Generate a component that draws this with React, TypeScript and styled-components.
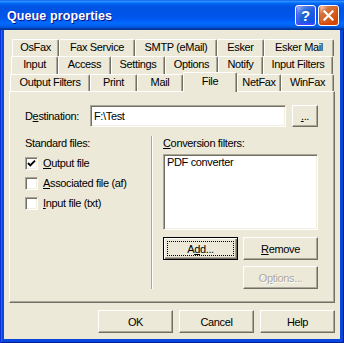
import React from "react";
import styled, { createGlobalStyle, css } from "styled-components";

const GlobalStyle = createGlobalStyle`
  html, body {
    margin: 0;
    padding: 0;
    background: #ECE9D8;
  }
  body {
    font-family: "Liberation Sans", Arial, sans-serif;
    font-size: 11px;
    letter-spacing: -0.35px;
    color: #000;
  }
  * {
    box-sizing: border-box;
  }
`;

const raised = css`
  border: 1px solid;
  border-color: #fff #716f64 #716f64 #fff;
  box-shadow: inset -1px -1px #aca899;
`;

const sunken = css`
  border: 1px solid;
  border-color: #aca899 #fff #fff #aca899;
  box-shadow: inset 1px 1px #716f64, inset -1px -1px #f1efe2;
  background: #fff;
`;

const Window = styled.div`
  width: 344px;
  height: 343px;
  display: flex;
  flex-direction: column;
  background: #0a47dc;
  box-shadow: inset 1px 0 #0831d9, inset -1px 0 #001ea0, inset 0 -1px #001ea0,
    inset 2px 0 #166aee, inset -2px 0 #0846d2;
`;

const TitleBar = styled.div`
  height: 30px;
  flex: none;
  display: flex;
  align-items: center;
  padding: 0 5px 0 7px;
  background: linear-gradient(
    to bottom,
    #0058ee 0%,
    #3593ff 4%,
    #288eff 6%,
    #127dff 8%,
    #036ffc 10%,
    #0262ee 14%,
    #0057e5 20%,
    #0054e3 24%,
    #0055eb 56%,
    #005bf5 66%,
    #026afe 76%,
    #0062ef 86%,
    #0052d6 92%,
    #0040ab 94%,
    #003092 100%
  );
`;

const Title = styled.div`
  flex: 1;
  color: #fff;
  font-family: "Liberation Sans", Arial, sans-serif;
  font-weight: bold;
  font-size: 12.5px;
  letter-spacing: 0.1px;
  text-shadow: 1px 1px #0f1089;
  padding-top: 1px;
`;

const CaptionButton = styled.div<{ $kind: "help" | "close" }>`
  width: 21px;
  height: 21px;
  margin-left: 2px;
  border: 1px solid #fff;
  border-radius: 3px;
  display: flex;
  align-items: center;
  justify-content: center;
  color: #fff;
  font-family: "Liberation Sans", Arial, sans-serif;
  font-weight: bold;
  font-size: 15px;
  letter-spacing: 0;
  background: ${(p) =>
    p.$kind === "close"
      ? "radial-gradient(circle at 90% 90%, #cc4600 0%, #dc6527 55%, #cd7546 70%, #ffccb2 90%, #fff 100%)"
      : "radial-gradient(circle at 90% 90%, #0054e9 0%, #2263d5 55%, #4479e4 70%, #a3bbec 90%, #fff 100%)"};
  box-shadow: inset 0 -1px 2px 1px ${(p) => (p.$kind === "close" ? "#da4600" : "#4646ff")};
`;

const Body = styled.div`
  flex: 1;
  margin: 0 4px 4px;
  background: #ece9d8;
  padding: 9px 5px 6px;
  display: flex;
  flex-direction: column;
`;

const TabRow = styled.div<{ $indent: number; $h: number }>`
  display: flex;
  align-items: flex-end;
  height: ${(p) => p.$h}px;
  padding-left: ${(p) => p.$indent}px;
`;

const Tab = styled.div<{ $w: number; $active?: boolean }>`
  width: ${(p) => p.$w}px;
  height: 100%;
  flex: none;
  border-top: 1px solid #fff;
  border-left: 1px solid #fff;
  border-right: 1px solid #716f64;
  box-shadow: inset -1px 0 #aca899;
  border-radius: 2px 2px 0 0;
  text-align: center;
  line-height: 13px;
  padding-top: 1px;
  white-space: nowrap;
  background: #ece9d8;
  ${(p) =>
    p.$active &&
    css`
      height: 20px;
      margin-bottom: -1px;
      padding-top: 2px;
      position: relative;
      z-index: 1;
    `}
`;

const Panel = styled.div`
  height: 212px;
  flex: none;
  ${raised}
  padding: 13px 16px 0 15px;
`;

const FieldRow = styled.div`
  display: flex;
  align-items: center;
  height: 22px;
`;

const Label = styled.div<{ $w?: number }>`
  line-height: 14px;
  white-space: nowrap;
  ${(p) => p.$w && `width: ${p.$w}px; flex: none;`}
`;

const TextBox = styled.div`
  flex: 1;
  height: 22px;
  ${sunken}
  padding: 0 3px;
  display: flex;
  align-items: center;
  margin-right: 6px;
`;

const Button = styled.div<{ $w: number; $focused?: boolean; $disabled?: boolean }>`
  width: ${(p) => p.$w}px;
  height: ${(p) => (p.$w < 40 ? 22 : 23)}px;
  flex: none;
  position: relative;
  display: flex;
  align-items: center;
  justify-content: center;
  background: #ece9d8;
  ${(p) =>
    p.$focused
      ? css`
          border: 1px solid #000;
          box-shadow: inset 1px 1px #fff, inset -1px -1px #716f64, inset -2px -2px #aca899;
          &::after {
            content: "";
            position: absolute;
            inset: 3px;
            border: 1px dotted #000;
          }
        `
      : raised}
  ${(p) =>
    p.$disabled &&
    css`
      color: #aca899;
      text-shadow: 1px 1px #fff;
    `}
`;

const U = styled.span`
  text-decoration: underline;
  text-underline-offset: 1px;
`;

const Columns = styled.div`
  display: flex;
  margin-top: 9px;
`;

const LeftCol = styled.div`
  width: 126px;
  flex: none;
`;

const Separator = styled.div`
  width: 2px;
  flex: none;
  border-left: 1px solid #aca899;
  border-right: 1px solid #fff;
`;

const RightCol = styled.div`
  width: 155px;
  margin-left: 10px;
  flex: none;
`;

const CheckList = styled.div`
  padding-top: 3px;
`;

const CheckRow = styled.div`
  display: flex;
  align-items: center;
  gap: 5px;
  height: 20px;
`;

const Box = styled.div`
  width: 13px;
  height: 13px;
  flex: none;
  ${sunken}
  display: flex;
  align-items: center;
  justify-content: center;
`;

const ListBox = styled.div`
  margin-top: 4px;
  height: 76px;
  ${sunken}
  padding: 1px 3px;
  line-height: 13px;
`;

const ButtonGrid = styled.div`
  margin-top: 7px;
  display: grid;
  grid-template-columns: 75px 75px;
  justify-content: space-between;
  row-gap: 6px;
`;

const Footer = styled.div`
  display: flex;
  justify-content: flex-end;
  gap: 6px;
  margin-top: 7px;
`;

const tabRows: { indent: number; h: number; tabs: [string, number, boolean?][] }[] = [
  {
    indent: 3,
    h: 17,
    tabs: [
      ["OsFax", 47],
      ["Fax Service", 76],
      ["SMTP (eMail)", 82],
      ["Esker", 47],
      ["Esker Mail", 70],
    ],
  },
  {
    indent: 2,
    h: 18,
    tabs: [
      ["Input", 47],
      ["Access", 53],
      ["Settings", 54],
      ["Options", 53],
      ["Notify", 45],
      ["Input Filters", 70],
    ],
  },
  {
    indent: 1,
    h: 17,
    tabs: [
      ["Output Filters", 80],
      ["Print", 47],
      ["Mail", 46],
      ["File", 54, true],
      ["NetFax", 44],
      ["WinFax", 53],
    ],
  },
];

const Check = () => (
  <svg width="9" height="9" viewBox="0 0 9 9">
    <path d="M1 4 L3.3 6.4 L8 1.6" fill="none" stroke="#000" strokeWidth="1.9" />
  </svg>
);

const CloseX = () => (
  <svg width="11" height="11" viewBox="0 0 11 11">
    <path d="M1.5 1.5 L9.5 9.5 M9.5 1.5 L1.5 9.5" stroke="#fff" strokeWidth="2.2" strokeLinecap="square" />
  </svg>
);

const App: React.FC = () => {
  return (
    <>
      <GlobalStyle />
      <Window>
        <TitleBar>
          <Title>Queue properties</Title>
          <CaptionButton $kind="help">?</CaptionButton>
          <CaptionButton $kind="close">
            <CloseX />
          </CaptionButton>
        </TitleBar>
        <Body>
          {tabRows.map((row, i) => (
            <TabRow key={i} $indent={row.indent} $h={row.h}>
              {row.tabs.map(([name, w, active]) => (
                <Tab key={name} $w={w} $active={active}>
                  {name}
                </Tab>
              ))}
            </TabRow>
          ))}
          <Panel>
            <FieldRow>
              <Label $w={65}>
                D<U>e</U>stination:
              </Label>
              <TextBox>F:\Test</TextBox>
              <Button $w={26}>
                <U>.</U>..
              </Button>
            </FieldRow>
            <Columns>
              <LeftCol>
                <Label>Standard files:</Label>
                <CheckList>
                  <CheckRow>
                    <Box>
                      <Check />
                    </Box>
                    <span>
                      <U>O</U>utput file
                    </span>
                  </CheckRow>
                  <CheckRow>
                    <Box />
                    <span>
                      <U>A</U>ssociated file (af)
                    </span>
                  </CheckRow>
                  <CheckRow>
                    <Box />
                    <span>
                      <U>I</U>nput file (txt)
                    </span>
                  </CheckRow>
                </CheckList>
              </LeftCol>
              <Separator />
              <RightCol>
                <Label>
                  <U>C</U>onversion filters:
                </Label>
                <ListBox>PDF converter</ListBox>
                <ButtonGrid>
                  <Button $w={75} $focused>
                    <span>
                      A<U>d</U>d...
                    </span>
                  </Button>
                  <Button $w={75}>
                    <span>
                      <U>R</U>emove
                    </span>
                  </Button>
                  <span />
                  <Button $w={75} $disabled>
                    <span>
                      O<U>p</U>tions...
                    </span>
                  </Button>
                </ButtonGrid>
              </RightCol>
            </Columns>
          </Panel>
          <Footer>
            <Button $w={75}>OK</Button>
            <Button $w={75}>Cancel</Button>
            <Button $w={75}>Help</Button>
          </Footer>
        </Body>
      </Window>
    </>
  );
};

export default App;
